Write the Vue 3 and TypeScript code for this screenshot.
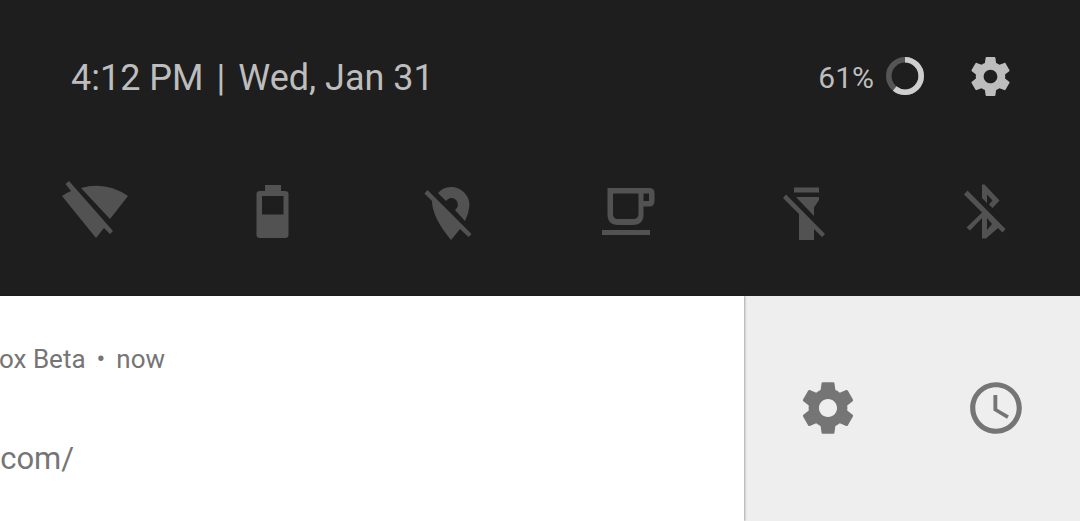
<script setup lang="ts">
interface Tile {
  label: string
  path: string
}

const batteryLevel = 61

const gear =
  'M19.43 12.98c.04-.32.07-.64.07-.98s-.03-.66-.07-.98l2.11-1.65c.19-.15.24-.42.12-.64l-2-3.46c-.12-.22-.39-.3-.61-.22l-2.49 1c-.52-.4-1.08-.73-1.69-.98l-.38-2.65C14.46 2.18 14.25 2 14 2h-4c-.25 0-.46.18-.49.42l-.38 2.65c-.61.25-1.17.59-1.69.98l-2.49-1c-.23-.09-.49 0-.61.22l-2 3.46c-.13.22-.07.49.12.64l2.11 1.65c-.04.32-.07.65-.07.98s.03.66.07.98l-2.11 1.65c-.19.15-.24.42-.12.64l2 3.46c.12.22.39.3.61.22l2.49-1c.52.4 1.08.73 1.69.98l.38 2.65c.03.24.24.42.49.42h4c.25 0 .46-.18.49-.42l.38-2.65c.61-.25 1.17-.59 1.69-.98l2.49 1c.23.09.49 0 .61-.22l2-3.46c.12-.22.07-.49-.12-.64l-2.11-1.65zM12 15.5c-1.93 0-3.5-1.57-3.5-3.5s1.57-3.5 3.5-3.5 3.5 1.57 3.5 3.5-1.57 3.5-3.5 3.5z'

const tiles: Tile[] = [
  {
    label: 'Wi-Fi off',
    path: 'M10 4L54 54L51 57L45 51L37 61L3 19Q7 16 12 14L6.500 7ZM22 11Q47 4 69 19L51 42Z',
  },
  {
    label: 'Battery saver',
    path: 'M28 8H44V14H48Q51.500 14 51.500 17V58Q51.500 61 48 61H23Q19.500 61 19.500 58V17Q19.500 14 23 14H28ZM25 19V37.500H46.500V19Z',
  },
  {
    label: 'Location off',
    path: 'M12.500 13L56.500 57L53.500 60L45 52L36 63Q17 40 17 24L9.500 16.500ZM23 16Q28 10 36 10A18.500 18.500 0 0 1 54.500 28Q54 36 50 44L40 33A6.500 6.500 0 1 0 31 24Z',
  },
  {
    label: 'Caffeine',
    path: 'M14.500 11H56Q61.500 11 61.500 16V24Q61.500 29.500 56 29.500H50.500V37Q50.500 48 40 48H25Q14.500 48 14.500 37ZM20 16.500V37Q20 42 25 42H40Q45.500 42 45.500 37V16.500ZM50.500 16.500V24H56V16.500ZM9 53H57V58H9Z',
  },
  {
    label: 'Flashlight off',
    path: 'M23 10.500H48V15.500H23ZM25 20H48V23L43 30.500V39ZM15 17.500L54 57L51 60L43 52V63H28V37L12 21Z',
  },
  {
    label: 'Bluetooth off',
    path: 'M18.500 13.500L56.500 52L53.500 55.500L49 51L37 61.500H33V41L21 53.500L17.500 50.500L33 35.500L15 17.500ZM38 41V53L43 47ZM33 7.500H35.500L50.500 23.500L43.500 31L40 27.500L43.500 23.500L38 17.500V26L33 21Z',
  },
]
</script>

<template>
  <main class="shade">
    <header class="quick">
      <div class="status">
        <div class="clock">
          <time>4:12 PM</time>
          <span>|</span>
          <time>Wed, Jan 31</time>
        </div>
        <div class="battery">
          <span class="percent">{{ batteryLevel }}%</span>
          <svg class="ring" viewBox="0 0 38 38" aria-hidden="true">
            <circle class="track" cx="19" cy="19" r="16.200" />
            <circle
              class="level"
              cx="19"
              cy="19"
              r="16.200"
              pathLength="100"
              :stroke-dasharray="`${batteryLevel} 100`"
              transform="rotate(-90 19 19)"
            />
          </svg>
        </div>
        <button class="settings" type="button" aria-label="Settings">
          <svg viewBox="0 0 24 24"><path :d="gear" /></svg>
        </button>
      </div>
      <nav class="tiles" aria-label="Quick settings">
        <button v-for="tile in tiles" :key="tile.label" class="tile" type="button" :aria-label="tile.label">
          <svg viewBox="0 0 72 72"><path :d="tile.path" fill-rule="evenodd" /></svg>
        </button>
      </nav>
    </header>
    <section class="notification">
      <article class="card">
        <p class="source">
          <span>ox Beta</span>
          <span>•</span>
          <span>now</span>
        </p>
        <p class="address">.com/</p>
      </article>
      <div class="actions">
        <button class="action" type="button" aria-label="Notification settings">
          <svg viewBox="0 0 24 24"><path :d="gear" /></svg>
        </button>
        <button class="action" type="button" aria-label="Snooze">
          <svg viewBox="0 0 24 24">
            <path
              d="M11.990 2C6.470 2 2 6.480 2 12s4.470 10 9.990 10C17.520 22 22 17.520 22 12S17.520 2 11.990 2zM12 20c-4.420 0-8-3.580-8-8s3.580-8 8-8 8 3.580 8 8-3.580 8-8 8zM12.500 7H11v6l5.250 3.150.75-1.230-4.500-2.670z"
            />
          </svg>
        </button>
      </div>
    </section>
  </main>
</template>

<style scoped>
.shade {
  display: flex;
  flex-direction: column;
  min-height: 100vh;
  overflow: hidden;
  font-family: Roboto, 'Liberation Sans', sans-serif;
}

button {
  display: flex;
  align-items: center;
  justify-content: center;
  padding: 0;
  border: 0;
  background: none;
  color: inherit;
  cursor: pointer;
}

svg {
  display: block;
  fill: currentColor;
}

.quick {
  padding: 44px 0 47px;
  background: #1e1e1e;
  color: #bdbdbd;
}

.status {
  display: flex;
  align-items: center;
  height: 64px;
  padding: 0 66px 0 71px;
}

.clock {
  display: flex;
  gap: 13px;
  margin-right: auto;
  padding-top: 4px;
  font-size: 36px;
  line-height: 44px;
  white-space: nowrap;
}

.battery {
  display: flex;
  align-items: center;
  gap: 12px;
  font-size: 30px;
  line-height: 36px;
}

.percent {
  padding-top: 4px;
}

.ring {
  width: 38px;
  height: 38px;
  fill: none;
  stroke-width: 5.6;
}

.track {
  stroke: #555;
}

.level {
  stroke: #cecece;
}

.settings {
  margin-left: 43px;
}

.settings svg {
  width: 47px;
  height: 47px;
}

.tiles {
  display: flex;
  justify-content: space-between;
  margin-top: 69px;
  padding: 0 59px;
  color: #525252;
}

.tile svg {
  width: 72px;
  height: 72px;
}

.notification {
  display: flex;
  flex: 1;
  background: #eee;
  color: #757575;
}

.card {
  flex: 1;
  overflow: hidden;
  padding-top: 46px;
  background: #fff;
  box-shadow: 1px 0 2px rgba(0, 0, 0, 0.3);
}

.source,
.address {
  margin: 0;
  white-space: nowrap;
}

.source {
  display: flex;
  gap: 11px;
  margin-left: -1px;
  font-size: 26px;
  line-height: 34px;
}

.address {
  margin: 65px 0 0 -8px;
  font-size: 31px;
  line-height: 36px;
}

.actions {
  display: grid;
  grid-template-columns: 168px 168px;
  padding-bottom: 2px;
}

.action svg {
  width: 62px;
  height: 62px;
}
</style>
